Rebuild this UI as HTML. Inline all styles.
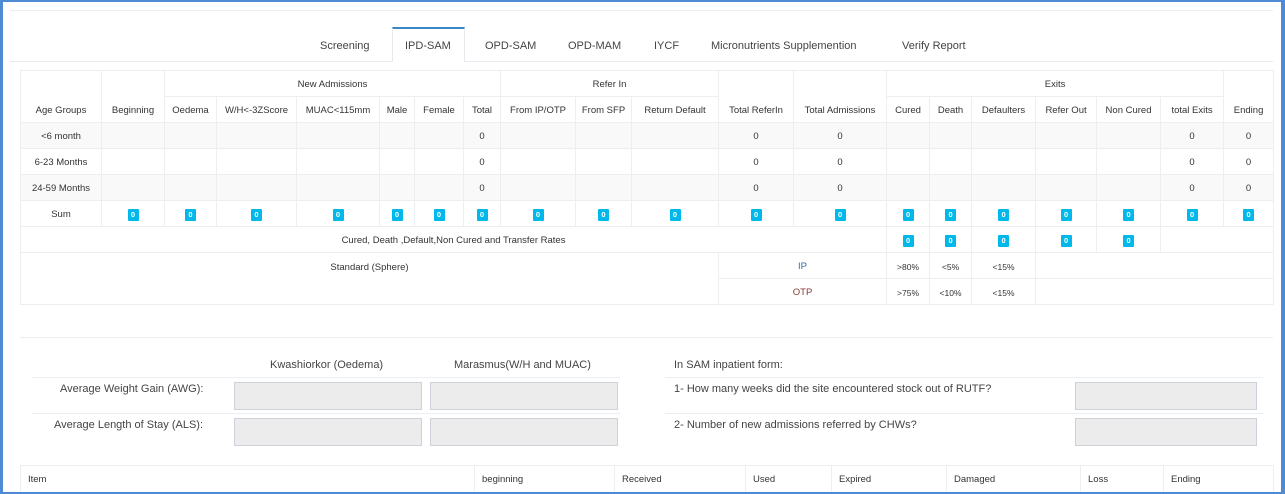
<!DOCTYPE html>
<html><head><meta charset="utf-8"><style>
*{box-sizing:border-box;margin:0;padding:0}
body{width:1285px;height:494px;overflow:hidden;background:#fff;font-family:"Liberation Sans",sans-serif;color:#333;position:relative}
.frame{position:absolute;left:0;top:0;width:1285px;height:494px;border-left:3px solid #4f8ad4;border-top:2px solid #4f8ad4;border-right:4px solid #4f8ad4;border-bottom:2px solid #4f8ad4;z-index:10;pointer-events:none}
.abs{position:absolute}
.tabs{left:10px;top:10px;width:1263px;height:52px;border-top:1px solid #eceff2;border-bottom:1px solid #e6e9ee}
.tab{position:absolute;top:41px;font-size:11px;color:#444;line-height:1}
.act{position:absolute;left:392px;top:27px;width:73px;height:35px;border-top:2px solid #3a87c8;border-left:1px solid #e6e9ee;border-right:1px solid #e6e9ee;background:#fff}
table{border-collapse:collapse;table-layout:fixed}
.t td{border:1px solid #eceff2;font-size:9.5px;text-align:center;height:26px;color:#333;padding:2px 0 0 0;overflow:hidden;white-space:nowrap}
.t tr.g td{background:#f9f9f9}
.b{display:inline-block;width:11px;height:12px;background:#00b9ea;color:#fff;font-size:7.5px;font-weight:bold;line-height:12px;border-radius:1px}
.lbl{font-size:11px;color:#444;position:absolute}
.inp{position:absolute;background:#ececec;border:1px solid #cdd2da;height:28px}
.hl{position:absolute;height:1px;background:#eceff2}
.bt td{border:1px solid #eceff2;border-bottom:none;font-size:9.5px;height:28px;padding-left:7px;color:#333}
</style></head><body>
<div class="frame"></div>
<div class="abs tabs"></div>
<div class="act"></div>
<div class="tab" style="left:320px">Screening</div>
<div class="tab" style="left:405px">IPD-SAM</div>
<div class="tab" style="left:485px">OPD-SAM</div>
<div class="tab" style="left:568px">OPD-MAM</div>
<div class="tab" style="left:654px">IYCF</div>
<div class="tab" style="left:711px">Micronutrients Supplemention</div>
<div class="tab" style="left:902px">Verify Report</div>

<table class="t abs" style="left:20px;top:70px;width:1253px">
<colgroup><col style="width:81px"><col style="width:63px"><col style="width:52px"><col style="width:80px"><col style="width:83px"><col style="width:35px"><col style="width:49px"><col style="width:37px"><col style="width:75px"><col style="width:56px"><col style="width:87px"><col style="width:75px"><col style="width:93px"><col style="width:43px"><col style="width:42px"><col style="width:64px"><col style="width:61px"><col style="width:64px"><col style="width:63px"><col style="width:50px"></colgroup>
<tr><td rowspan="2" style="vertical-align:bottom;padding-bottom:6px">Age Groups</td><td rowspan="2" style="vertical-align:bottom;padding-bottom:6px">Beginning</td><td colspan="6">New Admissions</td><td colspan="3">Refer In</td><td rowspan="2" style="vertical-align:bottom;padding-bottom:6px">Total ReferIn</td><td rowspan="2" style="vertical-align:bottom;padding-bottom:6px">Total Admissions</td><td colspan="6">Exits</td><td rowspan="2" style="vertical-align:bottom;padding-bottom:6px">Ending</td></tr>
<tr><td>Oedema</td><td>W/H&lt;-3ZScore</td><td>MUAC&lt;115mm</td><td>Male</td><td>Female</td><td>Total</td><td>From IP/OTP</td><td>From SFP</td><td>Return Default</td><td>Cured</td><td>Death</td><td>Defaulters</td><td>Refer Out</td><td>Non Cured</td><td>total Exits</td></tr>
<tr class="g"><td>&lt;6 month</td><td></td><td></td><td></td><td></td><td></td><td></td><td>0</td><td></td><td></td><td></td><td>0</td><td>0</td><td></td><td></td><td></td><td></td><td></td><td>0</td><td>0</td></tr>
<tr><td>6-23 Months</td><td></td><td></td><td></td><td></td><td></td><td></td><td>0</td><td></td><td></td><td></td><td>0</td><td>0</td><td></td><td></td><td></td><td></td><td></td><td>0</td><td>0</td></tr>
<tr class="g"><td>24-59 Months</td><td></td><td></td><td></td><td></td><td></td><td></td><td>0</td><td></td><td></td><td></td><td>0</td><td>0</td><td></td><td></td><td></td><td></td><td></td><td>0</td><td>0</td></tr>
<tr><td>Sum</td><td><span class="b">0</span></td><td><span class="b">0</span></td><td><span class="b">0</span></td><td><span class="b">0</span></td><td><span class="b">0</span></td><td><span class="b">0</span></td><td><span class="b">0</span></td><td><span class="b">0</span></td><td><span class="b">0</span></td><td><span class="b">0</span></td><td><span class="b">0</span></td><td><span class="b">0</span></td><td><span class="b">0</span></td><td><span class="b">0</span></td><td><span class="b">0</span></td><td><span class="b">0</span></td><td><span class="b">0</span></td><td><span class="b">0</span></td><td><span class="b">0</span></td></tr>
<tr><td colspan="13">Cured, Death ,Default,Non Cured and Transfer Rates</td><td><span class="b">0</span></td><td><span class="b">0</span></td><td><span class="b">0</span></td><td><span class="b">0</span></td><td><span class="b">0</span></td><td colspan="2"></td></tr>
<tr><td colspan="11" rowspan="2" style="vertical-align:top;padding-top:9px">Standard (Sphere)</td><td colspan="2" style="color:#2a6fb0">IP</td><td style="font-size:8.5px">&gt;80%</td><td style="font-size:8.5px">&lt;5%</td><td style="font-size:8.5px">&lt;15%</td><td colspan="4"></td></tr>
<tr><td colspan="2" style="color:#8a3a3a">OTP</td><td style="font-size:8.5px">&gt;75%</td><td style="font-size:8.5px">&lt;10%</td><td style="font-size:8.5px">&lt;15%</td><td colspan="4"></td></tr>
</table>

<div class="hl" style="left:20px;top:337px;width:1253px"></div>
<div class="lbl" style="left:270px;top:359px">Kwashiorkor (Oedema)</div>
<div class="lbl" style="left:454px;top:359px">Marasmus(W/H and MUAC)</div>
<div class="hl" style="left:32px;top:377px;width:588px"></div>
<div class="hl" style="left:32px;top:413px;width:588px"></div>
<div class="lbl" style="left:60px;top:383px">Average Weight Gain (AWG):</div>
<div class="lbl" style="left:54px;top:419px">Average Length of Stay (ALS):</div>
<div class="inp" style="left:234px;top:382px;width:188px"></div>
<div class="inp" style="left:430px;top:382px;width:188px"></div>
<div class="inp" style="left:234px;top:418px;width:188px"></div>
<div class="inp" style="left:430px;top:418px;width:188px"></div>
<div class="lbl" style="left:674px;top:359px">In SAM inpatient form:</div>
<div class="hl" style="left:665px;top:377px;width:598px"></div>
<div class="hl" style="left:665px;top:413px;width:598px"></div>
<div class="lbl" style="left:674px;top:383px">1- How many weeks did the site encountered stock out of RUTF?</div>
<div class="lbl" style="left:674px;top:419px">2- Number of new admissions referred by CHWs?</div>
<div class="inp" style="left:1075px;top:382px;width:182px"></div>
<div class="inp" style="left:1075px;top:418px;width:182px"></div>

<table class="bt abs" style="left:20px;top:465px;width:1253px">
<colgroup><col style="width:454px"><col style="width:140px"><col style="width:131px"><col style="width:86px"><col style="width:115px"><col style="width:134px"><col style="width:83px"><col style="width:110px"></colgroup>
<tr><td>Item</td><td>beginning</td><td>Received</td><td>Used</td><td>Expired</td><td>Damaged</td><td>Loss</td><td>Ending</td></tr>
</table>
</body></html>
